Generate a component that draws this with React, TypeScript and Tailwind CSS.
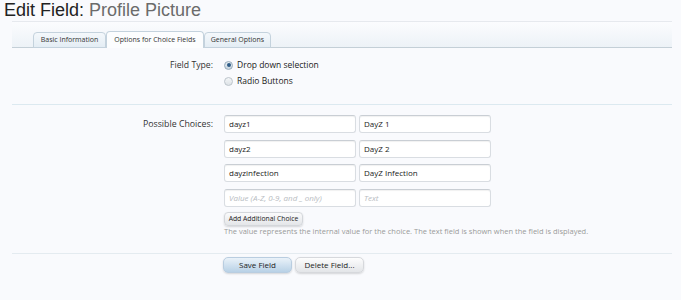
export default function App() {
  const rows: [string, string][] = [
    ["dayz1", "DayZ 1"],
    ["dayz2", "DayZ 2"],
    ["dayzinfection", "DayZ Infection"],
  ];
  const inputCls =
    "h-[18px] w-[132px] rounded-[3px] border border-[#d9dde2] border-t-[#c9ced4] bg-white pl-[4px] text-[8px] leading-[16px] text-[#222] shadow-[inset_0_1px_1px_rgba(0,0,0,0.06)] whitespace-nowrap overflow-hidden";
  return (
    <div className="min-h-[300px] w-[681px] bg-[#f9fafd] font-['Open_Sans',sans-serif] text-[#333]">
      <div className="h-[21px] pl-[4px] font-['Liberation_Sans',Arial,sans-serif] text-[18px] leading-[21px] whitespace-nowrap">
        <span className="text-[#222]">Edit Field: </span>
        <span className="text-[#6b6b6b]">Profile Picture</span>
      </div>
      <div className="ml-[12px] mr-[9px]">
        {/* tab bar */}
        <div className="flex h-[27px] items-end border-t border-b border-t-[#e6e9ee] border-b-[#c4cfd7] bg-gradient-to-b from-[#fbfcfe] to-[#edf2f7] pl-[21px]">
          <div className="-mb-px flex h-[16px] w-[73px] items-center justify-center whitespace-nowrap rounded-t-[4px] border border-[#c4d2dd] bg-gradient-to-b from-[#f4f8fb] to-[#e4edf4] text-[7px] text-[#333]">
            Basic Information
          </div>
          <div className="-mb-px flex h-[17px] w-[98px] items-center justify-center whitespace-nowrap rounded-t-[4px] border border-b-0 border-[#c4d2dd] bg-[#fcfdfe] text-[7px] text-[#333]">
            Options for Choice Fields
          </div>
          <div className="-mb-px flex h-[16px] w-[67px] items-center justify-center whitespace-nowrap rounded-t-[4px] border border-[#c4d2dd] bg-gradient-to-b from-[#f4f8fb] to-[#e4edf4] text-[7px] text-[#333]">
            General Options
          </div>
        </div>

        {/* field type */}
        <div className="grid grid-cols-[201px_1fr] gap-x-[11px] pt-[9px] pb-[15px]">
          <div className="text-right text-[8.7px] leading-[16px] text-[#333]">Field Type:</div>
          <div className="flex flex-col text-[8.5px] leading-[16px] text-[#222]">
            <div className="flex items-center">
              <span className="flex h-[9px] w-[9px] items-center justify-center rounded-full border border-[#97abbb] bg-gradient-to-b from-[#e8eef3] to-[#c7d4de]">
                <span className="h-[4px] w-[4px] rounded-full bg-[#2f5b86]" />
              </span>
              <span className="ml-[4px]">Drop down selection</span>
            </div>
            <div className="flex items-center">
              <span className="h-[9px] w-[9px] rounded-full border border-[#bcc4cb] bg-gradient-to-b from-[#f4f6f8] to-[#dde2e6]" />
              <span className="ml-[4px]">Radio Buttons</span>
            </div>
          </div>
        </div>

        {/* possible choices */}
        <div className="border-t border-[#dce9f0] pt-[10px] pb-[16px]">
          <div className="grid grid-cols-[201px_1fr] gap-x-[11px]">
            <div className="pt-[1px] text-right text-[8.8px] leading-[16px] text-[#333]">Possible Choices:</div>
            <div className="flex flex-col gap-[6.5px]">
              {rows.map(([v, t]) => (
                <div key={v} className="flex gap-[3px]">
                  <div className={inputCls}>{v}</div>
                  <div className={inputCls}>{t}</div>
                </div>
              ))}
              <div className="flex gap-[3px]">
                <div className={inputCls + " italic !text-[#b8bcc2]"}>Value (A-Z, 0-9, and _ only)</div>
                <div className={inputCls + " italic !text-[#b8bcc2]"}>Text</div>
              </div>
              <div className="-mt-[1px] flex flex-col">
                <div className="flex h-[14px] w-[79px] items-center justify-center whitespace-nowrap rounded-[4px] border border-[#d4d7db] bg-gradient-to-b from-[#fbfbfc] to-[#e4e6e9] text-[6.8px] text-[#222] shadow-[0_1px_2px_rgba(0,0,0,0.15)]">
                  Add Additional Choice
                </div>
                <div className="whitespace-nowrap text-[7.5px] leading-[11px] text-[#9a9a9a]">
                  The value represents the internal value for the choice. The text field is shown when the field is displayed.
                </div>
              </div>
            </div>
          </div>
        </div>

        {/* buttons */}
        <div className="flex gap-[3px] border-t border-[#e4ebf0] pt-[3px] pl-[211px]">
          <div className="flex h-[16px] w-[69px] items-center justify-center rounded-[5px] border border-[#b9cde0] bg-gradient-to-b from-[#eaf2f9] to-[#b8d1e6] text-[8px] text-[#222] shadow-[0_1px_2px_rgba(0,0,0,0.15)]">
            Save Field
          </div>
          <div className="flex h-[16px] w-[69px] items-center justify-center rounded-[5px] border border-[#d6d8dc] bg-gradient-to-b from-[#fdfdfd] to-[#e3e5e8] text-[8px] text-[#222] shadow-[0_1px_2px_rgba(0,0,0,0.15)]">
            Delete Field...
          </div>
        </div>
      </div>
    </div>
  );
}
